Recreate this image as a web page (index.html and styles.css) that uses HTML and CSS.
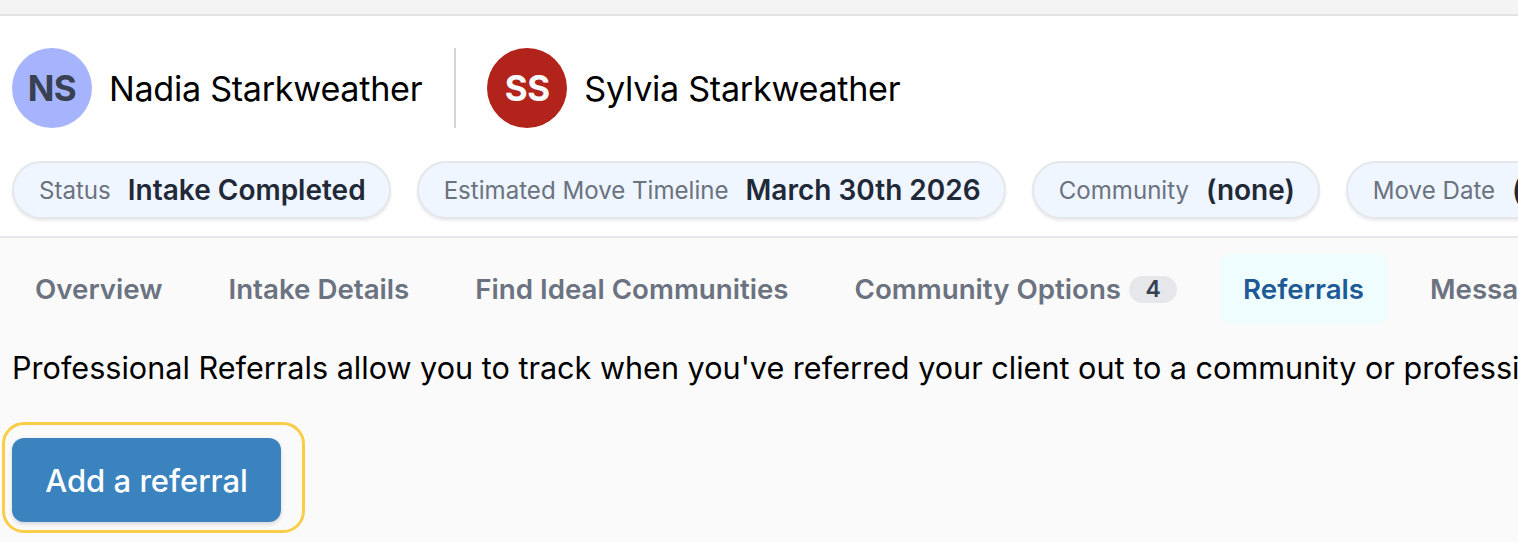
FILE: index.html
```html
<!DOCTYPE html>
<html>
<head>
<meta charset="utf-8">
<link rel="stylesheet" href="styles.css">
</head>
<body>
<div class="topbar"></div>
<header class="header">
  <div class="people">
    <div class="person">
      <div class="avatar avatar-ns">NS</div>
      <div class="name">Nadia Starkweather</div>
    </div>
    <div class="divider"></div>
    <div class="person">
      <div class="avatar avatar-ss">SS</div>
      <div class="name">Sylvia Starkweather</div>
    </div>
  </div>
  <div class="pills">
    <div class="pill"><span class="pill-label">Status</span><span class="pill-value">Intake Completed</span></div>
    <div class="pill"><span class="pill-label">Estimated Move Timeline</span><span class="pill-value">March 30th 2026</span></div>
    <div class="pill"><span class="pill-label">Community</span><span class="pill-value">(none)</span></div>
    <div class="pill"><span class="pill-label">Move Date</span><span class="pill-value">(none)</span></div>
  </div>
</header>
<main class="content">
  <nav class="tabs">
    <div class="tab">Overview</div>
    <div class="tab">Intake Details</div>
    <div class="tab">Find Ideal Communities</div>
    <div class="tab">Community Options <span class="badge">4</span></div>
    <div class="tab tab-active">Referrals</div>
    <div class="tab">Messages</div>
    <div class="tab">Documents</div>
  </nav>
  <p class="desc">Professional Referrals allow you to track when you've referred your client out to a community or professional service provider.</p>
  <div class="highlight">
    <button class="btn">Add a referral</button>
  </div>
</main>
</body>
</html>
```

FILE: styles.css
```css
* { box-sizing: border-box; }
html, body {
  margin: 0;
  padding: 0;
  overflow: hidden;
  width: 1518px;
  height: 542px;
}
body {
  font-family: Inter, "Noto Sans", sans-serif;
  background: #fafafa;
  color: #000;
}
.topbar {
  height: 16px;
  background: #f4f4f4;
  border-bottom: 2px solid #e4e4e4;
}
.header {
  background: #fff;
  padding: 32px 0 17px 12px;
  border-bottom: 2px solid #e5e7eb;
}
.people {
  display: flex;
  align-items: center;
  white-space: nowrap;
}
.person {
  display: flex;
  align-items: center;
  gap: 17px;
}
.avatar {
  width: 80px;
  height: 80px;
  border-radius: 50%;
  display: flex;
  align-items: center;
  justify-content: center;
  font-weight: 700;
  font-size: 35px;
  letter-spacing: -0.5px;
}
.avatar-ns { background: #a5b4fc; color: #374151; }
.avatar-ss { background: #b2231c; color: #f9fafb; }
.name {
  font-size: 34.2px;
  letter-spacing: -0.3px;
}
.divider {
  width: 2px;
  height: 80px;
  background: #d1d5db;
  margin: 0 31px 0 32px;
}
.pills {
  display: flex;
  gap: 26px;
  margin-top: 33px;
  white-space: nowrap;
}
.pill {
  flex: none;
  height: 58px;
  border-radius: 29px;
  background: #eff6ff;
  border: 2px solid #e5e7eb;
  box-shadow: 0 2px 3px rgba(0,0,0,0.08);
  display: flex;
  align-items: center;
  padding: 0 23px 0 25px;
  gap: 17px;
}
.pill-label {
  font-size: 24.1px;
  color: #6b7280;
}
.pill-value {
  font-size: 28px;
  font-weight: 600;
  color: #1f2937;
}
.content {
  padding: 16px 0 0 12px;
}
.tabs {
  display: flex;
  gap: 20px;
  white-space: nowrap;
}
.tab {
  flex: none;
  height: 70px;
  padding: 0 23px;
  display: flex;
  align-items: center;
  font-size: 27.7px;
  font-weight: 600;
  color: #6b7280;
  border-radius: 10px;
}
.tab-active {
  background: #f0fdff;
  color: #1e5a96;
}
.badge {
  display: inline-flex;
  align-items: center;
  justify-content: center;
  margin-left: 8px;
  width: 48px;
  height: 27px;
  border-radius: 14px;
  background: #e5e7eb;
  color: #374151;
  font-size: 23px;
  font-weight: 600;
}
.desc {
  margin: 24px 0 0;
  font-size: 30.6px;
  line-height: 40px;
  white-space: nowrap;
  color: #000;
}
.highlight {
  display: inline-block;
  margin: 34px 0 0 -10px;
  padding: 13px 21px 8px 7px;
  border: 3.5px solid #f9cd47;
  border-radius: 22px;
}
.btn {
  display: block;
  width: 269px;
  height: 84px;
  border: none;
  border-radius: 12px;
  background: #3b83bf;
  color: #fff;
  font-family: Inter, "Noto Sans", sans-serif;
  font-size: 31px;
  font-weight: 500;
  box-shadow: 0 2px 4px rgba(0,0,0,0.15);
}
```
